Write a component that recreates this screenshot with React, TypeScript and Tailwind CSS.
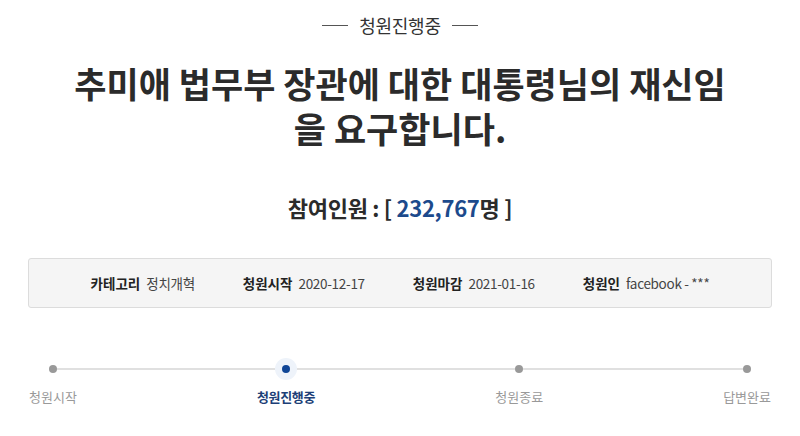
import React from 'react';

const info = [
  { label: '카테고리', value: '정치개혁' },
  { label: '청원시작', value: '2020-12-17' },
  { label: '청원마감', value: '2021-01-16' },
  { label: '청원인', value: 'facebook - ***' },
];

const steps = [
  { name: '청원시작', active: false },
  { name: '청원진행중', active: true },
  { name: '청원종료', active: false },
  { name: '답변완료', active: false },
];

export default function App() {
  return (
    <div
      className="w-full h-[436px] bg-white overflow-hidden text-[#333]"
      style={{ fontFamily: '"Noto Sans CJK KR", "Noto Sans", sans-serif' }}
    >
      <div className="flex items-center justify-center gap-[11px] pt-[12px] h-[38px]">
        <span className="block w-[26px] h-px bg-[#555]" />
        <span className="text-[18px] leading-[26px] text-[#333] tracking-[-0.3px]">청원진행중</span>
        <span className="block w-[26px] h-px bg-[#555]" />
      </div>

      <h1 className="mx-auto mt-[22px] max-w-[662px] text-center text-[35px] leading-[45px] font-bold text-[#2b2b2b]">
        추미애 법무부 장관에 대한 대통령님의 재신임 을 요구합니다.
      </h1>

      <p className="mt-[42px] text-center text-[22px] leading-[30px] font-bold text-[#2b2b2b] tracking-[-0.3px]">
        참여인원 : [ <span className="text-[#1c4a8c]">232,767</span>명 ]
      </p>

      <div className="mx-[28px] mt-[36px] h-[50px] rounded-[3px] border border-[#dcdcdc] bg-[#f5f5f5] flex items-center justify-center gap-[48px] text-[13.5px]">
        {info.map((it) => (
          <div key={it.label} className="flex items-center gap-[6px]">
            <span className="font-bold text-[#222]">{it.label}</span>
            <span className="text-[#444] tracking-[-0.3px]">{it.value}</span>
          </div>
        ))}
      </div>

      <div className="relative mx-[29px] mt-[50px]">
        <div className="absolute left-[23px] right-[25px] top-[10px] h-[2px] bg-[#e0e0e0]" />
        <div className="relative flex justify-between">
          {steps.map((s) => (
            <div key={s.name} className="flex flex-col items-center">
              <div className="h-[22px] w-[22px] flex items-center justify-center">
                {s.active ? (
                  <span className="flex h-[22px] w-[22px] items-center justify-center rounded-full bg-[#eef3fa]">
                    <span className="block h-[8px] w-[8px] rounded-full bg-[#0f4596]" />
                  </span>
                ) : (
                  <span className="block h-[8px] w-[8px] rounded-full bg-[#999]" />
                )}
              </div>
              <span
                className={
                  s.active
                    ? 'mt-[6px] text-[13px] leading-[22px] font-bold text-[#1d3f77] tracking-[-0.3px]'
                    : 'mt-[6px] text-[13px] leading-[22px] text-[#999]'
                }
              >
                {s.name}
              </span>
            </div>
          ))}
        </div>
      </div>
    </div>
  );
}
